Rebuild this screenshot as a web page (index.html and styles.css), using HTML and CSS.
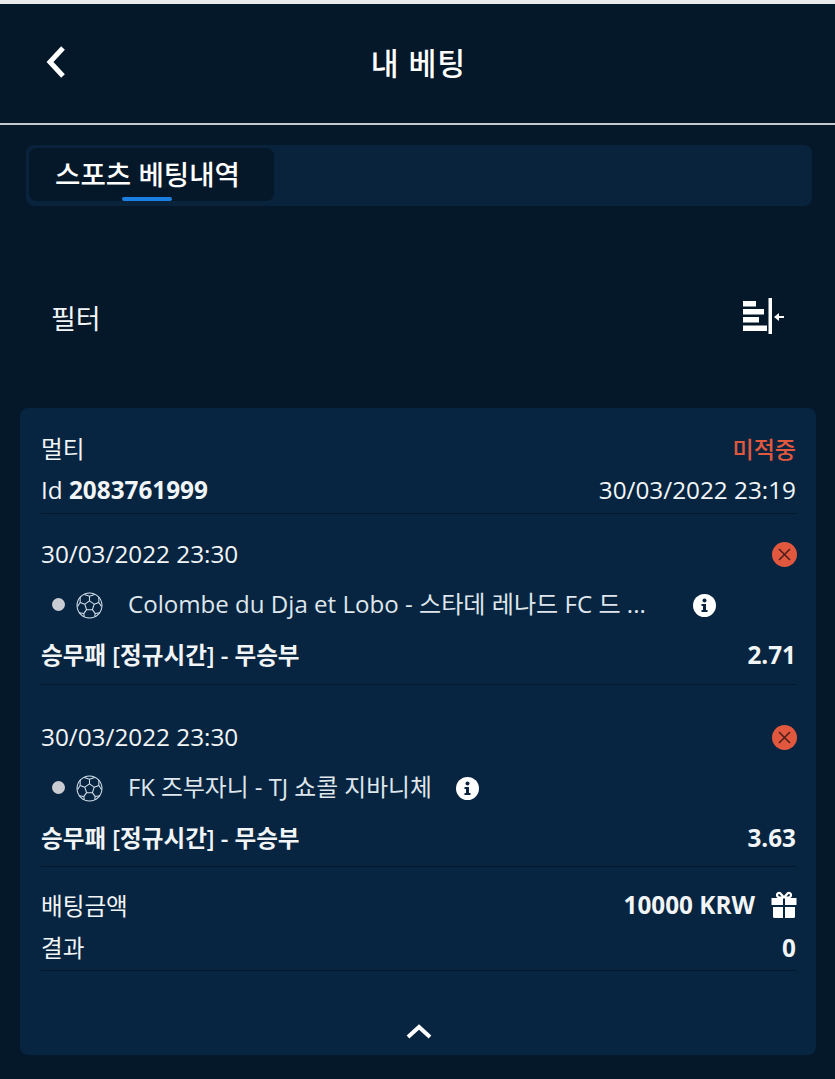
FILE: index.html
```html
<!DOCTYPE html>
<html lang="ko">
<head>
    <meta charset="utf-8">
    <title>내 베팅</title>
    <link rel="stylesheet" href="styles.css">
</head>
<body>
    <header class="top-bar">
        <svg class="back-icon" width="22" height="34" viewBox="0 0 22 34"><path d="M18 3 5 17l13 14" fill="none" stroke="#fff" stroke-width="5"/></svg>
        <h1 class="page-title">내 베팅</h1>
    </header>

    <nav class="tabs">
        <div class="tab">스포츠 베팅내역<span class="tab-line"></span></div>
    </nav>

    <div class="filter-row">
        <span>필터</span>
        <svg width="42" height="38" viewBox="0 0 42 38">
            <g fill="#fff">
                <rect x="0" y="3" width="13" height="5.500"/>
                <rect x="0" y="11" width="21" height="5.500"/>
                <rect x="0" y="19" width="16" height="5.500"/>
                <rect x="0" y="27.500" width="24" height="5.500"/>
                <rect x="25.500" y="0" width="3.500" height="36"/>
                <rect x="35" y="18" width="6" height="2"/>
                <path d="M31 19l5-4v8z"/>
            </g>
        </svg>
    </div>

    <main class="bet-card">
        <section class="bet-head">
            <div class="row row-type">
                <span class="ko">멀티</span>
                <span class="lost">미적중</span>
            </div>
            <div class="row row-id">
                <span>Id <b>2083761999</b></span>
                <span>30/03/2022 23:19</span>
            </div>
        </section>

        <!-- first selection -->
        <section class="selection">
            <div class="row sel-date">
                <span>30/03/2022 23:30</span>
                <svg class="x-icon" width="25" height="25" viewBox="0 0 25 25"><circle cx="12.500" cy="12.500" r="12.500" fill="#e2583e"/><path d="M7 7l11 11M18 7 7 18" stroke="#4a1c1c" stroke-width="1.500"/></svg>
            </div>
            <div class="match">
                <span class="dot"></span>
                <svg class="ball" width="27" height="27" viewBox="0 0 26 26"><g fill="none" stroke="#d5e2ee" stroke-width="1"><circle cx="13" cy="13" r="12"/><path d="M13 8.500l4.500 3.200-1.700 5.300h-5.600l-1.700-5.300zM13 8.500V4M17.500 11.700l4.500-1.600M15.800 17l2.700 3.800M10.200 17l-2.700 3.800M8.500 11.700 4 10.100M8 2.500 13 4l5-1.500M22 10.100l2.500 3.900M22 4.800v5.300M4 10.100 1.500 14M4 4.800v5.300M7.500 20.800l.5 3M18.500 20.800l-.5 3M7.500 20.800l-4.500-.8M18.500 20.800l4.500-.8"/></g></svg>
                <span class="match-name match-long">Colombe du Dja et Lobo - 스타데 레나드 FC 드 ...</span>
                <svg class="info" width="23" height="23" viewBox="0 0 23 23"><circle cx="11.500" cy="11.500" r="11.500" fill="#fff"/><g fill="#0a2340"><circle cx="11.500" cy="6.500" r="2"/><path d="M8.500 10h4.500v6h1.500v2h-6v-2H10v-4H8.500z"/></g></svg>
            </div>
            <div class="row market">
                <span class="ko">승무패 [정규시간] - 무승부</span>
                <span class="odds">2.71</span>
            </div>
        </section>

        <!-- second selection -->
        <section class="selection">
            <div class="row sel-date">
                <span>30/03/2022 23:30</span>
                <svg class="x-icon" width="25" height="25" viewBox="0 0 25 25"><circle cx="12.500" cy="12.500" r="12.500" fill="#e2583e"/><path d="M7 7l11 11M18 7 7 18" stroke="#4a1c1c" stroke-width="1.500"/></svg>
            </div>
            <div class="match">
                <span class="dot"></span>
                <svg class="ball" width="27" height="27" viewBox="0 0 26 26"><g fill="none" stroke="#d5e2ee" stroke-width="1"><circle cx="13" cy="13" r="12"/><path d="M13 8.500l4.500 3.200-1.700 5.300h-5.600l-1.700-5.300zM13 8.500V4M17.500 11.700l4.500-1.600M15.800 17l2.700 3.800M10.200 17l-2.700 3.800M8.500 11.700 4 10.100M8 2.500 13 4l5-1.500M22 10.100l2.500 3.900M22 4.800v5.300M4 10.100 1.500 14M4 4.800v5.300M7.500 20.800l.5 3M18.500 20.800l-.5 3M7.500 20.800l-4.500-.8M18.500 20.800l4.500-.8"/></g></svg>
                <span class="match-name match-short">FK 즈부자니 - TJ 쇼콜 지바니체</span>
                <svg class="info" width="23" height="23" viewBox="0 0 23 23"><circle cx="11.500" cy="11.500" r="11.500" fill="#fff"/><g fill="#0a2340"><circle cx="11.500" cy="6.500" r="2"/><path d="M8.500 10h4.500v6h1.500v2h-6v-2H10v-4H8.500z"/></g></svg>
            </div>
            <div class="row market">
                <span class="ko">승무패 [정규시간] - 무승부</span>
                <span class="odds">3.63</span>
            </div>
        </section>

        <section class="summary">
            <div class="row row-stake">
                <span class="ko">배팅금액</span>
                <span class="stake">
                    <b>10000 KRW</b>
                    <svg width="26" height="28" viewBox="0 0 26 28"><g fill="#fff"><path d="M.5 7H12v7H.5zM14 7h11.500v7H14zM2 16h10v11H3.500A1.500 1.500 0 0 1 2 25.500zM14 16h10v9.500a1.500 1.500 0 0 1-1.500 1.500H14z"/></g><path d="M13 6.500 9.500 2.500c-1.500-1.500-4 0-3.500 2 .3 1.300 1.500 2 3 2zM13 6.500l3.500-4c1.500-1.500 4 0 3.500 2-.3 1.300-1.500 2-3 2z" fill="none" stroke="#fff" stroke-width="2.200"/></svg>
                </span>
            </div>
            <div class="row row-result">
                <span class="ko">결과</span>
                <b>0</b>
            </div>
        </section>

        <div class="collapse">
            <svg width="26" height="16" viewBox="0 0 26 16"><path d="M2 14 13 4l11 10" fill="none" stroke="#fff" stroke-width="4"/></svg>
        </div>
    </main>
</body>
</html>
```

FILE: styles.css
```css
* {
    box-sizing: border-box;
}
html {
    background: #04182a;
}
body {
    margin: 0;
    height: 1079px;
    overflow: hidden;
    border-top: 4px solid #e8eaec;
    background: #04182a;
    color: #f2f5f7;
    font-family: "Open Sans", "Noto Sans CJK KR", sans-serif;
    font-size: 24.3px;
}
b {
    font-weight: 700;
}
.ko {
    font-size: 23.6px;
}
.top-bar {
    height: 121px;
    display: flex;
    align-items: center;
    justify-content: center;
    position: relative;
    border-bottom: 2px solid #c5c9cc;
}
.back-icon {
    position: absolute;
    left: 45px;
    top: 41px;
}
.page-title {
    margin: 0 0 3px 2px;
    font-size: 30.3px;
    font-weight: 500;
    color: #fff;
    letter-spacing: 1px;
}
.tabs {
    height: 61px;
    margin: 20px 23px 0 26px;
    padding: 3px;
    border-radius: 8px;
    background: #0a233d;
}
.tab {
    position: relative;
    width: 245px;
    height: 53px;
    padding-right: 8px;
    border-radius: 8px;
    background: #04182a;
    color: #fff;
    font-size: 27.6px;
    font-weight: 500;
    line-height: 52px;
    text-align: center;
}
.tab-line {
    position: absolute;
    left: 93px;
    bottom: 0;
    width: 50px;
    height: 4px;
    border-radius: 2px;
    background: #1a7fe0;
}
.filter-row {
    height: 76px;
    margin-top: 73px;
    padding: 0 50px 0 51px;
    display: flex;
    align-items: center;
    justify-content: space-between;
    font-size: 27px;
}
.bet-card {
    height: 647px;
    margin: 53px 19px 0 20px;
    padding: 19px 20px 0 21px;
    border-radius: 8px;
    background: #072540;
}
.row {
    display: flex;
    align-items: center;
    justify-content: space-between;
}
.row-type {
    height: 41px;
}
.lost {
    color: #e2583e;
    font-size: 23px;
    font-weight: 500;
}
.row-id {
    height: 42px;
}
.bet-head {
    height: 87px;
    border-bottom: 1px solid #04182a;
}
.selection {
    height: 171px;
    padding-top: 18px;
    border-bottom: 1px solid #04182a;
}
.selection + .selection {
    height: 182px;
    padding-top: 30px;
}
.sel-date {
    height: 42px;
}
.x-icon {
    margin: 2px -1px 0 0;
}
.match {
    height: 50px;
    margin-top: 3px;
    display: flex;
    align-items: center;
    padding-left: 11px;
}
.dot {
    width: 13px;
    height: 13px;
    margin-top: 4px;
    border-radius: 50%;
    background: #c9ccd0;
}
.ball {
    margin: 6px 0 0 11px;
}
.info {
    margin-top: 6px;
}
.match-name {
    margin-left: 25px;
    color: #dfe6ec;
}
.match-long {
    width: 565px;
    font-size: 24.1px;
    white-space: nowrap;
}
.match-short {
    font-size: 23.800px;
    margin-right: 24px;
}
.market {
    height: 42px;
    margin-top: 6px;
    font-weight: 600;
}
.odds {
    font-weight: 700;
}
.summary {
    height: 104px;
    padding-top: 16px;
    border-bottom: 1px solid #04182a;
}
.row-stake {
    height: 43px;
}
.row-result {
    height: 42px;
}
.stake {
    display: flex;
    align-items: center;
    gap: 16px;
}
.stake svg {
    margin-right: -1px;
}
.collapse {
    margin-top: 52px;
    display: flex;
    justify-content: center;
}
```
